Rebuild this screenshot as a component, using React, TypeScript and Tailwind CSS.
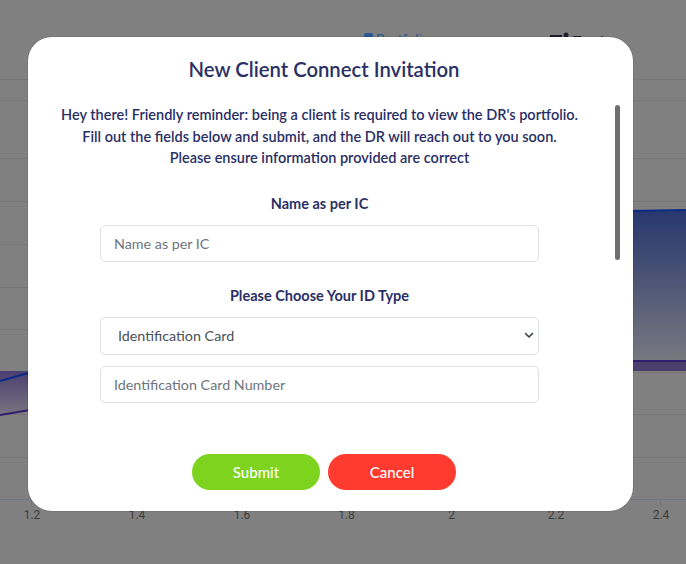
const gridLines = [79, 100, 158, 201, 244, 287, 329, 372, 414, 457];
const ticks = [
  { x: 31, label: '1.2' },
  { x: 136, label: '1.4' },
  { x: 241, label: '1.6' },
  { x: 345.5, label: '1.8' },
  { x: 450.5, label: '2' },
  { x: 555, label: '2.2' },
  { x: 660, label: '2.4' },
];

const Chart = () => (
  <svg className="absolute inset-0" width="686" height="564" viewBox="0 0 686 564">
    <defs>
      <linearGradient id="blueFill" x1="0" y1="0" x2="0" y2="1">
        <stop offset="0" stopColor="#27376e" />
        <stop offset="1" stopColor="#77787f" />
      </linearGradient>
      <linearGradient id="purpleFill" x1="0" y1="0" x2="0" y2="1">
        <stop offset="0" stopColor="#4a3f70" />
        <stop offset="1" stopColor="#77747f" />
      </linearGradient>
    </defs>
    {gridLines.map((y) => (
      <line key={y} x1="0" x2="686" y1={y + 0.5} y2={y + 0.5} stroke="#767676" />
    ))}
    <polygon points="630,211 686,210 686,361 630,361" fill="url(#blueFill)" />
    <polygon points="630,361 686,361 686,371 630,371" fill="#4b3f6e" />
    <polygon points="0,371 30,371 30,410 0,415" fill="url(#purpleFill)" />
    <line x1="630" y1="211" x2="686" y2="210" stroke="#0b2a86" strokeWidth="2" />
    <line x1="630" y1="361" x2="686" y2="361" stroke="#2f1f6c" strokeWidth="2" />
    <line x1="0" y1="381" x2="30" y2="372.5" stroke="#0b2a86" strokeWidth="2" />
    <line x1="0" y1="415" x2="30" y2="410" stroke="#2f1f6c" strokeWidth="2" />
    <line x1="0" x2="686" y1="499.5" y2="499.5" stroke="#6f7680" />
    {ticks.map((t) => (
      <g key={t.label}>
        <line x1={t.x + 0.5} x2={t.x + 0.5} y1="499" y2="507" stroke="#6f7680" />
        <text x={t.x + 1} y="519" textAnchor="middle" fontSize="12" fill="#3d3d3d" fontFamily="Roboto, sans-serif">
          {t.label}
        </text>
      </g>
    ))}
    {/* nav items peeking above the dialog */}
    <rect x="364" y="33" width="9" height="10" rx="2" fill="#2a5a96" />
    <text x="376" y="45" fontSize="14" fill="#2a5a96" fontFamily="Roboto, sans-serif">Portfolio</text>
    <rect x="550" y="35" width="12" height="2" fill="#20202c" />
    <circle cx="566" cy="35" r="2.5" fill="#20202c" />
    <text x="573" y="47" fontSize="14" fill="#20202c" fontFamily="Roboto, sans-serif">Track</text>
  </svg>
);

const fieldClass =
  'block w-[439px] h-[37.5px] ml-[72px] rounded-[5px] border border-[#dee2e6] bg-white text-[14.3px] text-[#495057] placeholder:text-[#6c757d] outline-none';

export default function App() {
  return (
    <div
      className="relative w-[686px] h-[564px] overflow-hidden bg-[#808080] pt-[37px] pl-[28px]"
      style={{ fontFamily: 'Lato, "Noto Sans", sans-serif' }}
    >
      <Chart />
      <div className="relative w-[605px] h-[474px] rounded-[24px] bg-white shadow-[0_0_0_1px_rgba(0,0,0,0.08)] text-[#2a2f66]">
        <div className="w-[583px] flex flex-col">
          <h1 className="mt-[18px] ml-[9px] h-[28px] leading-[28px] text-center text-[20.3px] font-semibold">
            New Client Connect Invitation
          </h1>
          <p className="mt-[21px] text-center text-[14.5px] leading-[21.5px] font-semibold">
            Hey there! Friendly reminder: being a client is required to view the DR's portfolio.
            <br />
            Fill out the fields below and submit, and the DR will reach out to you soon.
            <br />
            Please ensure information provided are correct
          </p>
          <label className="mt-[24px] h-[22px] leading-[22px] text-center text-[14.5px] font-bold">
            Name as per IC
          </label>
          <input className={`${fieldClass} mt-[10px] px-[13px]`} placeholder="Name as per IC" />
          <label className="mt-[23px] h-[22px] leading-[22px] text-center text-[14.5px] font-bold">
            Please Choose Your ID Type
          </label>
          <div className="relative mt-[10px]">
            <select className={`${fieldClass} appearance-none px-[17px]`} defaultValue="ic">
              <option value="ic">Identification Card</option>
            </select>
            <svg
              className="absolute left-[495px] top-[14px]"
              width="12"
              height="10"
              viewBox="0 0 12 10"
              fill="none"
              stroke="#343a40"
              strokeWidth="1.5"
              strokeLinecap="round"
              strokeLinejoin="round"
            >
              <path d="M2.5 2.5 L6 6 L9.5 2.5" />
            </svg>
          </div>
          <input className={`${fieldClass} mt-[11px] px-[13px]`} placeholder="Identification Card Number" />
          <div className="mt-[51px] ml-[9px] flex justify-center gap-2">
            <button className="w-[128px] h-[36px] rounded-full bg-[#7ed31f] text-white text-[15px] font-medium">
              Submit
            </button>
            <button className="w-[128px] h-[36px] rounded-full bg-[#ff3b30] text-white text-[15px] font-medium">
              Cancel
            </button>
          </div>
        </div>
        <div className="absolute left-[587px] top-[68px] w-[5px] h-[155px] rounded-full bg-[#6e6e6e]" />
      </div>
    </div>
  );
}
